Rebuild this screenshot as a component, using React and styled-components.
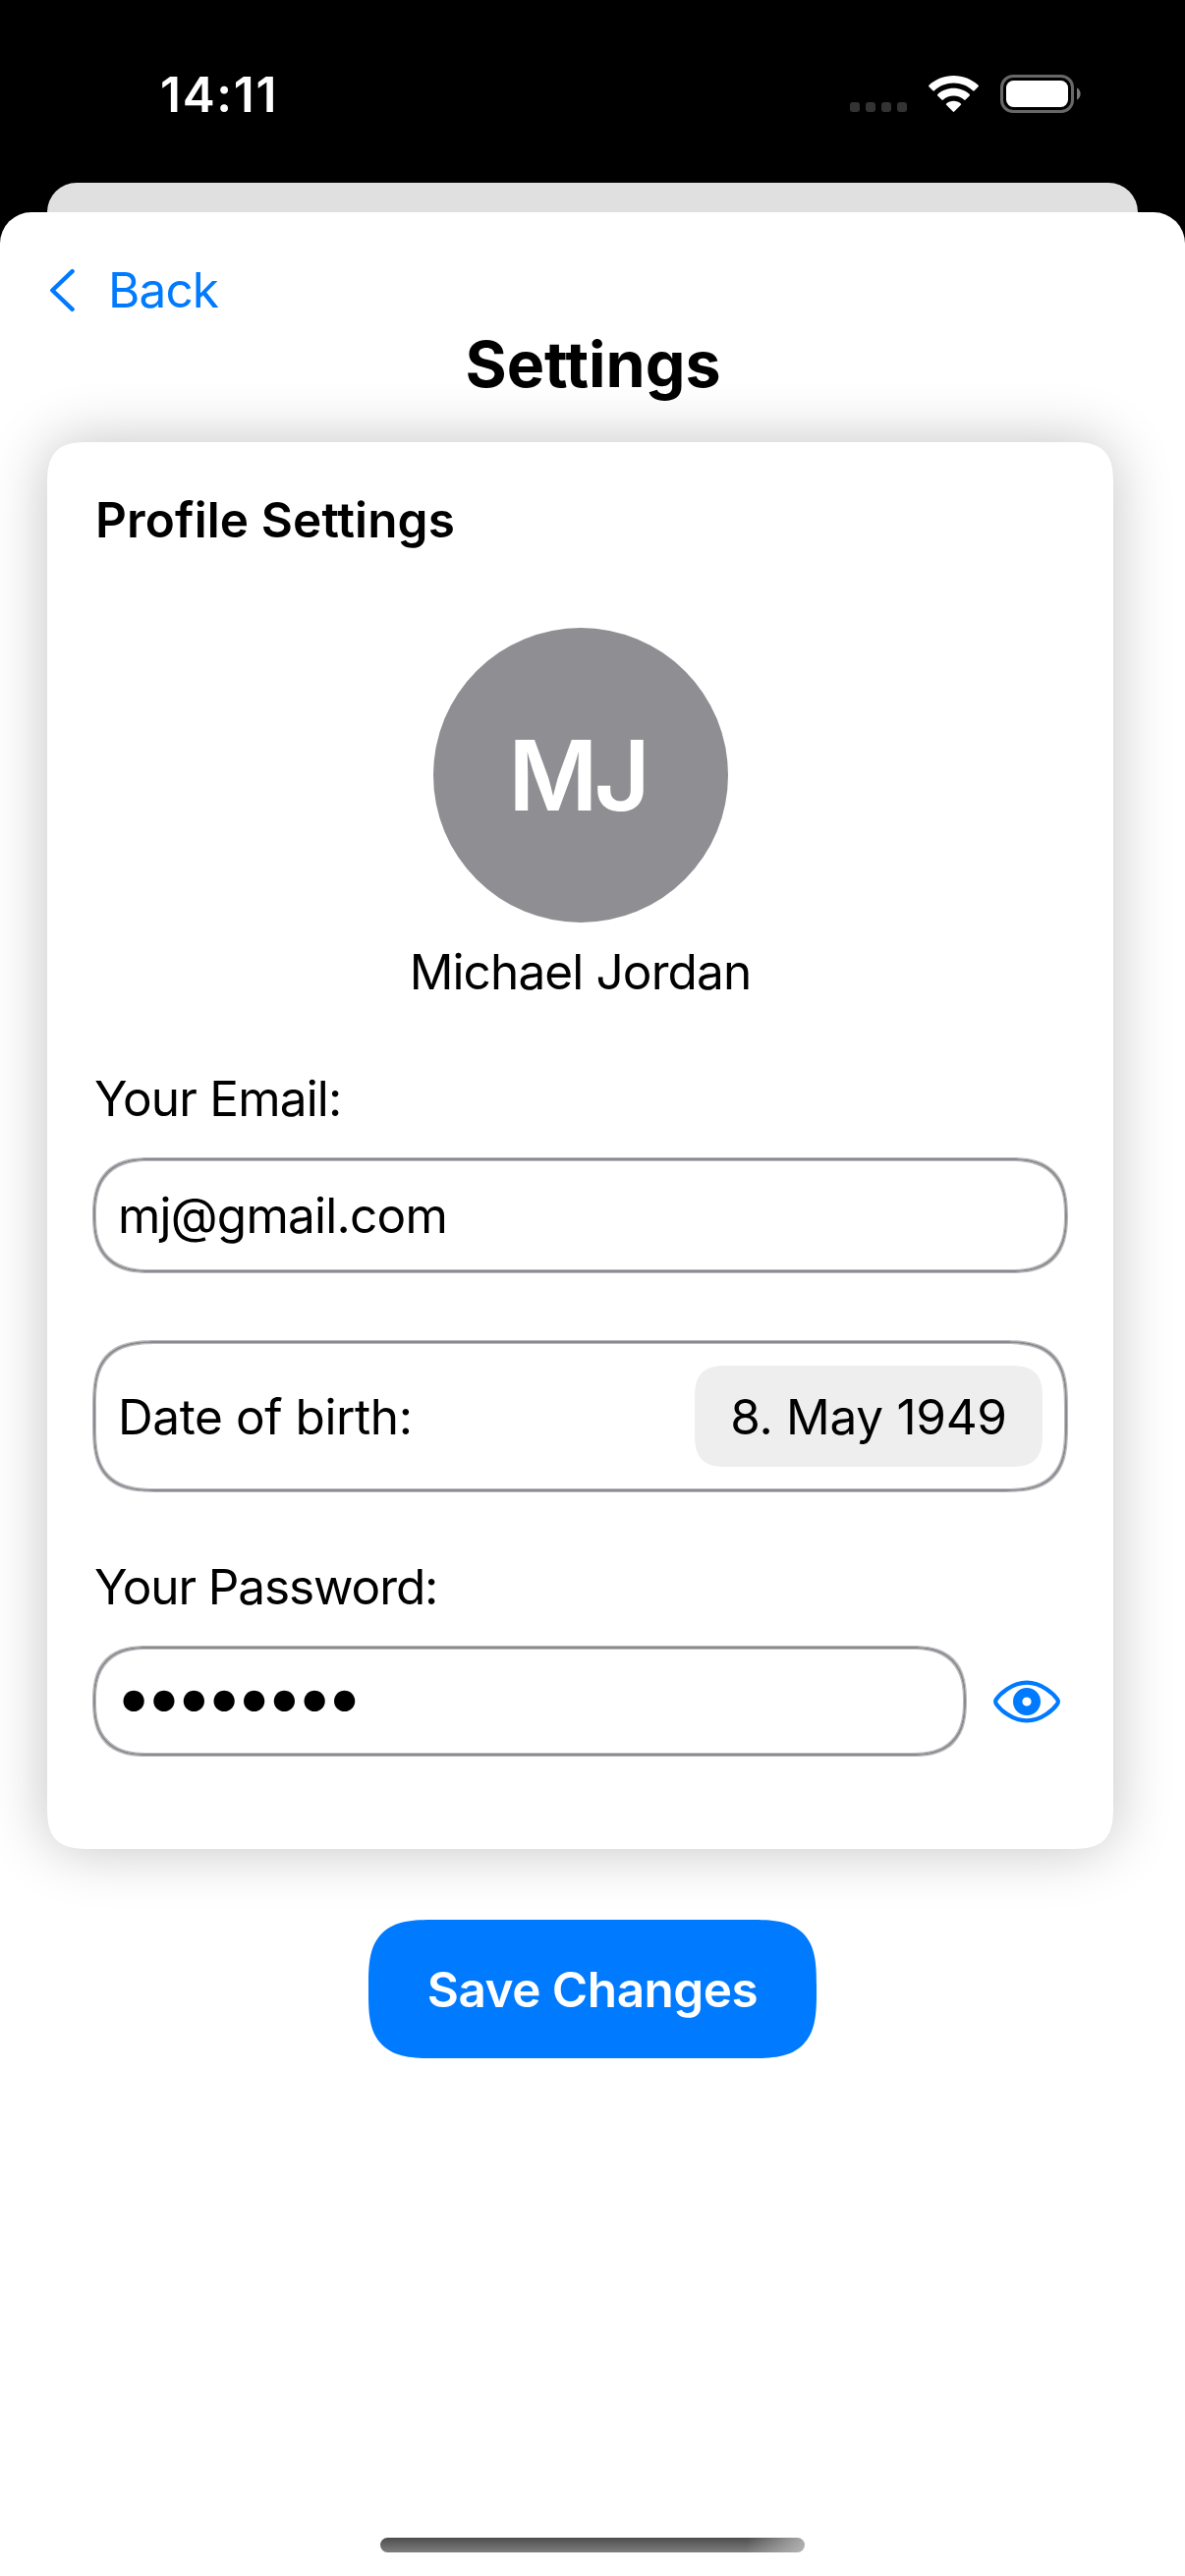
import React from "react";
import styled, { createGlobalStyle, css } from "styled-components";

const BLUE = "#007aff";
const GRAY = "#8e8e93";

const GlobalStyle = createGlobalStyle`
  *, *::before, *::after { box-sizing: border-box; }
  body {
    margin: 0;
    background: #000;
    font-family: Inter, "Liberation Sans", sans-serif;
    font-size: 49.5px;
    line-height: 60px;
    color: #000;
  }
  button { font: inherit; border: 0; padding: 0; background: none; color: inherit; }
`;

/* iOS-style continuous corners, with plain rounding as the fallback */
const continuous = (r, k = 1.6) => css`
  border-radius: ${r}px;
  @supports (corner-shape: superellipse(1.6)) {
    border-radius: ${r * 1.5}px;
    corner-shape: superellipse(${k});
  }
`;

const Screen = styled.div`
  display: flex;
  flex-direction: column;
  width: 1206px;
  height: 2622px;
  overflow: hidden;
  background: #000;
`;

const StatusBar = styled.header`
  flex: none;
  display: flex;
  justify-content: space-between;
  height: 186px;
  padding: 66px 105px 0 163px;
  color: #fff;
`;

const Time = styled.span`
  font-weight: 600;
  letter-spacing: 1.7px;
`;

const StatusIcons = styled.svg`
  display: block;
  width: 236px;
  height: 60px;
`;

const BackdropSheet = styled.div`
  flex: none;
  height: 30px;
  margin: 0 48px;
  background: #e0e0e0;
  border-radius: 30px 30px 0 0;
`;

const Sheet = styled.main`
  flex: 1;
  display: flex;
  flex-direction: column;
  align-items: center;
  padding: 49px 0 24px;
  background: #fff;
  border-radius: 32px 32px 0 0;
`;

const BackButton = styled.button`
  align-self: flex-start;
  display: flex;
  align-items: center;
  gap: 34px;
  height: 60px;
  margin-left: 48px;
  color: ${BLUE};
  letter-spacing: -0.9px;
`;

const Title = styled.h1`
  margin: 7px 0 0;
  padding-left: 1px;
  font-size: 64.5px;
  line-height: 78px;
  font-weight: 700;
`;

const Card = styled.section`
  align-self: flex-start;
  display: flex;
  flex-direction: column;
  width: 1085px;
  height: 1432px;
  margin: 40px 0 0 48px;
  padding: 49px 47px 0;
  background: #fff;
  box-shadow: 0 0 60px rgba(0, 0, 0, 0.24);
  ${continuous(30)}
`;

const CardTitle = styled.h2`
  margin: 0 0 0 2px;
  font-size: inherit;
  font-weight: 600;
  letter-spacing: 0.12px;
`;

const Profile = styled.div`
  display: flex;
  flex-direction: column;
  align-items: center;
  gap: 20px;
  margin-top: 80px;
`;

const Avatar = styled.div`
  display: flex;
  align-items: center;
  justify-content: center;
  width: 300px;
  height: 300px;
  padding-right: 6px;
  border-radius: 50%;
  background: ${GRAY};
  color: #fff;
  font-size: 99px;
  line-height: 120px;
  font-weight: 570;
  letter-spacing: -4px;
`;

const Text = styled.span`
  letter-spacing: ${(p) => p.$spacing}px;
`;

const Label = styled.label`
  display: block;
  margin: ${(p) => p.$top}px 0 31px 1px;
  letter-spacing: ${(p) => p.$spacing}px;
`;

const Field = styled.div`
  flex: none;
  display: flex;
  align-items: center;
  justify-content: space-between;
  width: ${(p) => (p.$width ? `${p.$width}px` : "auto")};
  height: ${(p) => p.$height}px;
  margin-top: ${(p) => p.$top || 0}px;
  padding: 0 23px;
  border: 2px solid #8a8a8f;
  box-shadow: 0 0 0 1px rgba(138, 138, 143, 0.6), inset 0 0 0 1px rgba(138, 138, 143, 0.6);
  ${(p) => continuous(45, p.$height < 120 ? 1.36 : 1.55)}
`;

const DatePill = styled.span`
  display: flex;
  align-items: center;
  justify-content: center;
  width: 354px;
  height: 103px;
  background: #eeeeef;
  letter-spacing: -0.3px;
  ${continuous(24)}
`;

const PasswordRow = styled.div`
  display: flex;
  align-items: center;
`;

const Dots = styled.span`
  margin-left: -3px;
  padding-bottom: 11px;
  font-size: 68px;
  letter-spacing: -7.6px;
`;

const EyeButton = styled.button`
  display: flex;
  margin-left: 27px;
`;

const SaveButton = styled.button`
  width: 456px;
  height: 141px;
  margin-top: 72px;
  padding-top: 1px;
  background: ${BLUE};
  color: #fff;
  font-weight: 600;
  letter-spacing: -0.5px;
  ${continuous(45)}
`;

const HomeIndicator = styled.div`
  width: 432px;
  height: 15px;
  margin-top: auto;
  border-radius: 8px;
  background:
    linear-gradient(100deg, transparent 86%, rgba(190, 190, 190, 0.85) 100%),
    linear-gradient(#4c4e4c, #7e7e7e);
`;

function StatusGlyphs() {
  return (
    <StatusIcons viewBox="865 66 236 60" aria-hidden="true">
      {[865, 881, 897, 913].map((x) => (
        <rect key={x} x={x} y="104" width="10" height="10" rx="3" fill="#333" />
      ))}
      <path fill="#fff" d="M970.5 77 C980 77 989 80.600 995.600 86.800 Q996.300 87.500 995.600 88.300 L991.600 92.300 Q990.900 93 990.100 92.300 C984.800 87.400 978 84.600 970.500 84.600 C963 84.600 956.200 87.400 950.900 92.300 Q950.100 93 949.400 92.300 L945.400 88.300 Q944.700 87.500 945.400 86.800 C952 80.600 961 77 970.500 77 Z" />
      <path fill="#fff" d="M970.500 89.800 C976.700 89.800 982.400 92.100 986.700 96 Q987.500 96.700 986.700 97.500 L982.600 101.600 Q981.900 102.300 981.100 101.600 C978.200 99 974.500 97.500 970.500 97.500 C966.500 97.500 962.800 99 959.900 101.600 Q959.100 102.300 958.400 101.600 L954.300 97.500 Q953.500 96.700 954.300 96 C958.600 92.100 964.300 89.800 970.500 89.800 Z" />
      <path fill="#fff" d="M970.500 102.700 C973.300 102.700 975.900 103.700 977.900 105.400 Q978.600 106 977.900 106.800 L971.200 113.600 Q970.500 114.300 969.800 113.600 L963.100 106.800 Q962.400 106 963.100 105.400 C965.100 103.700 967.700 102.700 970.500 102.700 Z" />
      <rect x="1019.500" y="77.500" width="72" height="36" rx="11.500" fill="none" stroke="#686868" strokeWidth="3" />
      <rect x="1024" y="82" width="63" height="27" rx="7.500" fill="#fff" />
      <path d="M1096 89.500 A6.800 6.800 0 0 1 1096 101.500 Z" fill="#7a7a7a" />
    </StatusIcons>
  );
}

function Chevron() {
  return (
    <svg width="28" height="60" viewBox="0 0 28 60" aria-hidden="true">
      <path d="M25.600 11.200 L5.300 30.500 L25.600 49.800" fill="none" stroke={BLUE} strokeWidth="4.400" strokeLinecap="round" strokeLinejoin="round" />
    </svg>
  );
}

function Eye() {
  return (
    <svg width="70" height="46" viewBox="0 0 70 46" aria-hidden="true">
      <path
        d="M35 3.600 C50.500 3.600 62.500 15.500 66 20.500 Q67.700 23 66 25.500 C62.500 30.500 50.500 42.400 35 42.400 C19.500 42.400 7.500 30.500 4 25.500 Q2.300 23 4 20.500 C7.500 15.500 19.500 3.600 35 3.600 Z"
        fill="none"
        stroke={BLUE}
        strokeWidth="4.200"
      />
      <circle cx="35" cy="23" r="9.300" fill="none" stroke={BLUE} strokeWidth="9.400" />
    </svg>
  );
}

export default function App() {
  return (
    <>
      <GlobalStyle />
      <Screen>
        <StatusBar>
          <Time>14:11</Time>
          <StatusGlyphs />
        </StatusBar>
        <BackdropSheet />
        <Sheet>
          <BackButton>
            <Chevron />
            Back
          </BackButton>
          <Title>Settings</Title>
          <Card>
            <CardTitle>Profile Settings</CardTitle>
            <Profile>
              <Avatar>MJ</Avatar>
              <Text $spacing={-0.87}>Michael Jordan</Text>
            </Profile>
            <Label $top={69} $spacing={-0.82}>Your Email:</Label>
            <Field $height={116}>
              <Text $spacing={-0.77}>mj@gmail.com</Text>
            </Field>
            <Field $height={153} $top={70}>
              <Text $spacing={-0.42}>Date of birth:</Text>
              <DatePill>8. May 1949</DatePill>
            </Field>
            <Label $top={67} $spacing={-1.1}>Your Password:</Label>
            <PasswordRow>
              <Field $height={111} $width={888}>
                <Dots>••••••••</Dots>
              </Field>
              <EyeButton aria-label="Show password">
                <Eye />
              </EyeButton>
            </PasswordRow>
          </Card>
          <SaveButton>Save Changes</SaveButton>
          <HomeIndicator />
        </Sheet>
      </Screen>
    </>
  );
}
